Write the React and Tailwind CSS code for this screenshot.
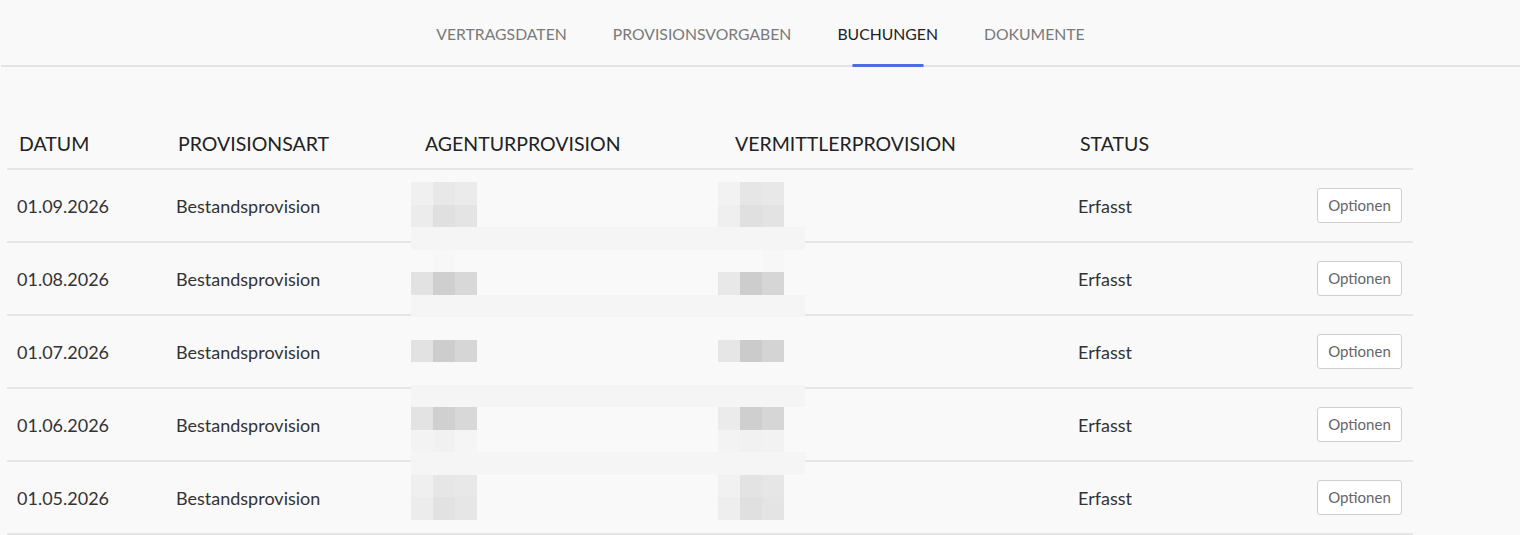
import React from "react";

const tabs = ["Vertragsdaten", "Provisionsvorgaben", "Buchungen", "Dokumente"];
const rows = ["01.09.2026", "01.08.2026", "01.07.2026", "01.06.2026", "01.05.2026"];

// pixelated redaction overlay, one entry per 22.5px band
const pix = [
  { a: ["#f0f0f0", "#e8e8e8", "#ebebeb"], v: ["#f2f2f2", "#e6e6e6", "#e8e8e8"] },
  { a: ["#ececec", "#e0e0e0", "#e4e4e4"], v: ["#efefef", "#e0e0e0", "#e3e3e3"] },
  { strip: true },
  { a: ["#f9f9f9", "#f7f7f7", "#f9f9f9"], v: ["#f9f9f9", "#f9f9f9", "#f7f7f7"] },
  { a: ["#e2e2e2", "#cfcfcf", "#d8d8d8"], v: ["#e8e8e8", "#cdcdcd", "#d6d6d6"] },
  { strip: true },
  {},
  { a: ["#e2e2e2", "#cdcdcd", "#d6d6d6"], v: ["#e6e6e6", "#cbcbcb", "#d4d4d4"] },
  {},
  { strip: true },
  { a: ["#e3e3e3", "#d0d0d0", "#d8d8d8"], v: ["#ebebeb", "#cfcfcf", "#d6d6d6"] },
  { a: ["#f3f3f3", "#f1f1f1", "#f5f5f5"], v: ["#f3f3f3", "#f1f1f1", "#f2f2f2"] },
  { strip: true },
  { a: ["#efefef", "#e6e6e6", "#e8e8e8"], v: ["#f1f1f1", "#e3e3e3", "#e6e6e6"] },
  { a: ["#ececec", "#e2e2e2", "#e6e6e6"], v: ["#eeeeee", "#e0e0e0", "#e4e4e4"] },
];

const cols = "grid grid-cols-[159px_247px_310px_345px_1fr] items-center";

function Cells({ colors }) {
  return (
    <div className="flex h-full">
      {colors.map((c, i) => (
        <div key={i} className="w-[22px] h-full" style={{ backgroundColor: c }} />
      ))}
    </div>
  );
}

export default function App() {
  return (
    <div
      className="relative min-h-[535px] bg-[#f9f9f9] text-[#333]"
      style={{ fontFamily: "Lato, 'Open Sans', sans-serif" }}
    >
      {/* Tabs */}
      <div className="flex justify-center h-[67px] border-b-2 border-[#e3e3e3] ml-[1px]">
        {tabs.map((t) => {
          const active = t === "Buchungen";
          return (
            <button
              key={t}
              className={`relative px-[23px] pt-[3px] text-[15.75px] uppercase ${
                active ? "text-[#222]" : "text-[#7a7a7a]"
              }`}
            >
              {t}
              {active && (
                <span className="absolute left-1/2 -translate-x-1/2 -bottom-[2px] w-[71px] h-[3px] bg-[#4a6fdc]" />
              )}
            </button>
          );
        })}
      </div>

      {/* Table */}
      <div className="ml-[7px] mt-[53px] w-[1406px]">
        <div className={`${cols} border-b-2 border-[#e6e6e6] py-[12px] text-[19.5px] leading-6 text-[#222] uppercase`}>
          <div className="pl-[12px]">Datum</div>
          <div className="pl-[12px]">Provisionsart</div>
          <div className="pl-[12px]">Agenturprovision</div>
          <div className="pl-[12px]">Vermittlerprovision</div>
          <div className="pl-[12px]">Status</div>
        </div>
        {rows.map((d) => (
          <div key={d} className={`${cols} h-[73px] border-b-2 border-[#e6e6e6] text-[18px]`}>
            <div className="pl-[10px] pt-[1px]">{d}</div>
            <div className="pl-[10px] pt-[1px]">Bestandsprovision</div>
            <div />
            <div />
            <div className="flex items-center justify-between pl-[10px] pr-[11px]">
              <span className="pt-[1px]">Erfasst</span>
              <button className="w-[85px] h-[35px] bg-white border border-[#cfcfcf] rounded-[3px] text-[15px] text-[#666]">
                Optionen
              </button>
            </div>
          </div>
        ))}
      </div>

      {/* Redaction overlay */}
      <div className="absolute left-[411px] top-[182px] w-[394px] flex flex-col">
        {pix.map((p, i) => (
          <div key={i} className="relative h-[22.5px]">
            {p.strip && <div className="absolute inset-0 bg-[#f5f5f5]" />}
            {p.a && (
              <div className="absolute left-0 top-0 h-full">
                <Cells colors={p.a} />
              </div>
            )}
            {p.v && (
              <div className="absolute left-[307px] top-0 h-full">
                <Cells colors={p.v} />
              </div>
            )}
          </div>
        ))}
      </div>
    </div>
  );
}
